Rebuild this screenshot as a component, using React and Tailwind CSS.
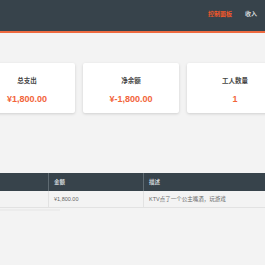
const cards = [
    { title: '总支出', value: '¥1,800.00' },
    { title: '净余额', value: '¥-1,800.00' },
    { title: '工人数量', value: '1' },
]

const App = () => {
    return (
        <div
            className="w-[265px] h-[265px] overflow-hidden bg-[#f3f3f3]"
            style={{ fontFamily: '"Liberation Sans", "Noto Sans CJK SC", sans-serif' }}
        >
            <div className="h-[33px] bg-[#37434b] border-b-2 border-[#ee6a3f] flex items-center justify-end pr-[8px]">
                <div className="flex items-center gap-[13px] pb-[3px]">
                    <span className="text-[6px] text-[#f0582a] font-bold">控制面板</span>
                    <span className="text-[6px] text-[#d6dadc] font-bold">收入</span>
                </div>
            </div>

            <div className="flex gap-[8px] ml-[-21px] mt-[30px]">
                {cards.map((c) => (
                    <div
                        key={c.title}
                        className="w-[96px] h-[50px] shrink-0 bg-white rounded-[2px] shadow-[0_1px_3px_rgba(0,0,0,0.15)] flex flex-col items-center pt-[14px]"
                    >
                        <div className="text-[6.5px] leading-[8px] font-bold text-[#444]">{c.title}</div>
                        <div className="text-[9px] leading-[10px] font-bold text-[#f2643a] mt-[9px]">{c.value}</div>
                    </div>
                ))}
            </div>

            <div className="mt-[60px] ml-[-40px] w-[360px]">
                <div className="flex h-[18px] bg-[#37434b] text-[5.5px] text-[#cfd5d8] font-bold">
                    <div className="w-[89px] border-r border-[#5f6b72]"></div>
                    <div className="w-[95px] border-r border-[#5f6b72] flex items-center pl-[5px]">金额</div>
                    <div className="flex-1 flex items-center pl-[5px]">描述</div>
                </div>
                <div className="flex h-[17px] text-[5.5px] text-[#666] border-b border-[#e2e2e2]">
                    <div className="w-[89px] border-r border-[#e2e2e2]"></div>
                    <div className="w-[95px] border-r border-[#e2e2e2] flex items-center pl-[5px]">¥1,800.00</div>
                    <div className="flex-1 flex items-center pl-[5px]">KTV点了一个公主嘴酒，玩游戏</div>
                </div>
                <div className="ml-[40px] w-[60px] h-[2px] bg-[#ececec] mt-[1px]"></div>
            </div>
        </div>
    )
}

export default App
